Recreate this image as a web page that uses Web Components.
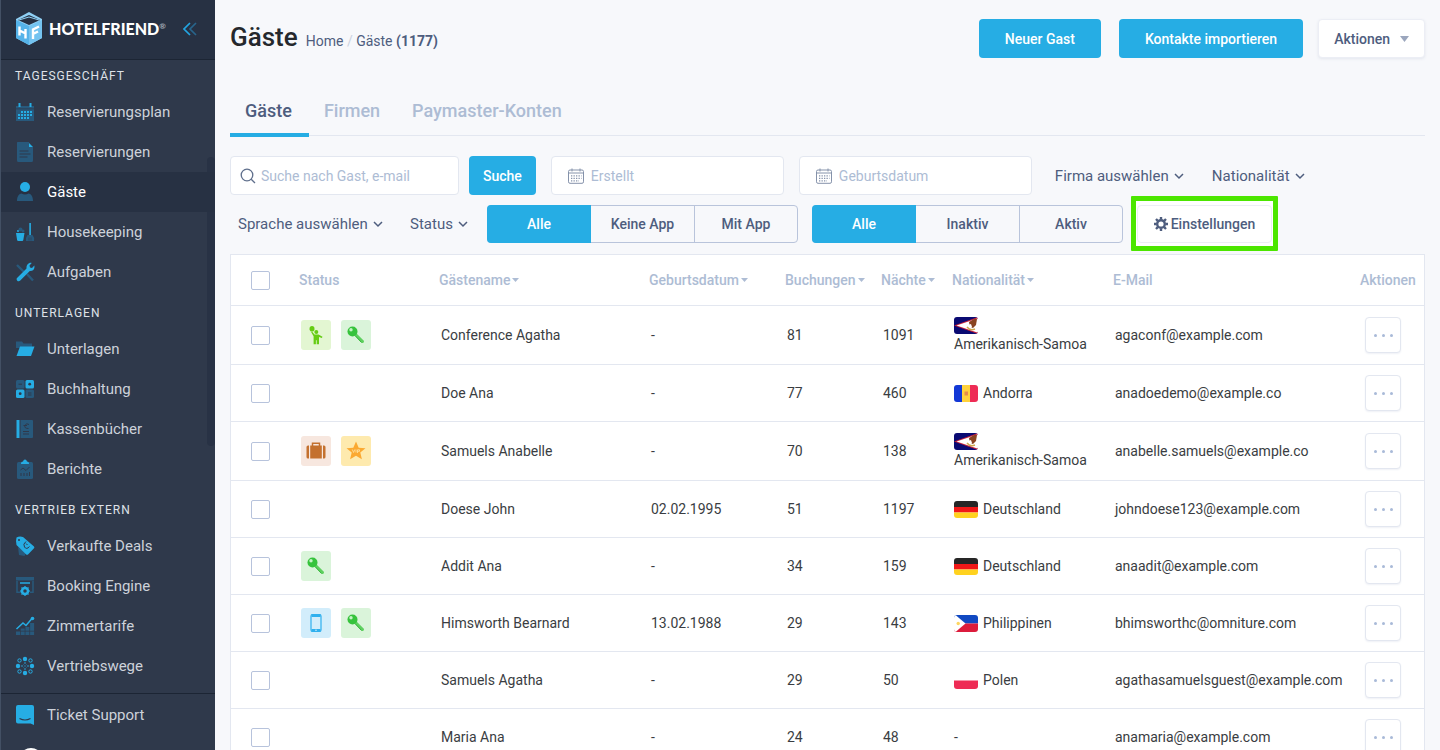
<!DOCTYPE html>
<html lang="de">
<head>
<meta charset="utf-8">
<title>Gäste – HotelFriend</title>
<meta name="viewport" content="width=device-width, initial-scale=1">
<style>
:root {
  --blue: #26ade4;
  --dim: #28597c;
  --ink: #3a3d42;
  --slate: #4e5d7e;
  --muted: #adbcd4;
  --line: #e3e7f0;
  --page: #f7f8fb;
}
body { margin: 0; background: var(--page); color: var(--ink); font: 14px/20px Roboto, "Liberation Sans", sans-serif; overflow: hidden; }
</style>
</head>
<body>
<hf-app>
  <hf-sidebar slot="sidebar">
    <hf-nav-section label="Tagesgeschäft" first>
      <hf-nav-item icon="calendar">Reservierungsplan</hf-nav-item>
      <hf-nav-item icon="document">Reservierungen</hf-nav-item>
      <hf-nav-item icon="person" active>Gäste</hf-nav-item>
      <hf-nav-item icon="cleaning">Housekeeping</hf-nav-item>
      <hf-nav-item icon="tools">Aufgaben</hf-nav-item>
    </hf-nav-section>
    <hf-nav-section label="Unterlagen">
      <hf-nav-item icon="folder">Unterlagen</hf-nav-item>
      <hf-nav-item icon="calc">Buchhaltung</hf-nav-item>
      <hf-nav-item icon="book">Kassenbücher</hf-nav-item>
      <hf-nav-item icon="clipboard">Berichte</hf-nav-item>
    </hf-nav-section>
    <hf-nav-section label="Vertrieb extern">
      <hf-nav-item icon="tag">Verkaufte Deals</hf-nav-item>
      <hf-nav-item icon="engine">Booking Engine</hf-nav-item>
      <hf-nav-item icon="chart">Zimmertarife</hf-nav-item>
      <hf-nav-item icon="network">Vertriebswege</hf-nav-item>
    </hf-nav-section>
    <hf-nav-item slot="footer" icon="chat">Ticket Support</hf-nav-item>
  </hf-sidebar>

  <hf-page-header heading="Gäste" count="1177">
    <hf-button>Neuer Gast</hf-button>
    <hf-button>Kontakte importieren</hf-button>
    <hf-button kind="menu">Aktionen</hf-button>
  </hf-page-header>
  <hf-tabs items="Gäste|Firmen|Paymaster-Konten"></hf-tabs>
  <hf-filters></hf-filters>
  <hf-guest-table></hf-guest-table>
</hf-app>

<script>
const RESET = `
  *, *::before, *::after { box-sizing: border-box; }
  button, input, select { font: inherit; color: inherit; margin: 0; }
  button, select, a { cursor: pointer; }
  a { color: inherit; text-decoration: none; }
  svg { display: block; flex: none; }
`;

function define(name, render) {
  customElements.define(name, class extends HTMLElement {
    connectedCallback() {
      if (this.shadowRoot) return;
      const template = document.createElement('template');
      template.innerHTML = render(this);
      this.attachShadow({ mode: 'open' }).append(template.content.cloneNode(true));
    }
  });
}

/* ---------- icons ---------- */
/* class b: bright blue, class d: dim blue, class k: sidebar colour cut-out */
const ICONS = {
  calendar: `<path class="d" d="M1 4h18v15H1z"/><path class="b" d="M3.500 1h2v4h-2zM14.500 1h2v4h-2z"/><path class="k" d="M1 6.500h18v.8H1z"/>
    <g class="b"><path d="M6 9h2v2H6zM9 9h2v2H9zM12 9h2v2h-2zM15 9h2v2h-2zM3 12h2v2H3zM6 12h2v2H6zM9 12h2v2H9zM12 12h2v2h-2zM15 12h2v2h-2zM3 15h2v2H3zM6 15h2v2H6zM9 15h2v2H9zM12 15h2v2h-2z"/></g>`,
  document: `<path class="d" d="M2.500 0H14v5h4v13.500q0 1.500-1.500 1.500h-13Q2 20 2 18.500V1q0-1 .5-1z"/><path class="b" d="M14 1l4 4h-4z"/><path class="ks" d="M4.500 9h9M4.500 12h11M4.500 15h8"/>`,
  person: `<circle class="b" cx="10" cy="5" r="5"/><path class="d" d="M2 19c0-4 1.500-7 4.500-7.500 2 1.200 5 1.200 7 0 3 .5 4.500 3.500 4.500 7.500z"/>`,
  cleaning: `<path class="b" d="M14.300 1h1.600v12h-1.600zM1 11h8.500l-1.200 7q-.2 1-1 1h-4q-1 0-1.200-1z"/><circle class="b" cx="3" cy="9" r="1"/><circle class="d" cx="5.500" cy="7.500" r="2"/><circle class="d" cx="8" cy="9" r="1.500"/><path class="d" d="M12.500 13h5q2 2 1.500 6h-8q-.3-4 1.500-6z"/><path class="ks" style="stroke-width:.6" d="M14 15.500v3M16 15.500v3"/>`,
  tools: `<path class="ds" style="stroke-width:2.400" d="M2 3l7 7M12 12l6 6.500"/><path class="b" d="M14 1.200c1-.4 2-.4 2.700-.2L14.500 3.500l.5 2 2 .5 2.300-2.400c.8 3-1 5.700-4.500 5.500L5 18.800c-1.800 1.500-4.400-.8-3-2.800l9.500-9.500c-.2-2.500.7-4.500 2.500-5.300z"/>`,
  folder: `<path class="d" d="M1 2.500h6l1.500 2H17V9H1v8z"/><path class="b" d="M5 7.500h14.500L16 17H1.500z"/>`,
  calc: `<g class="d"><rect x="1" y="1" width="8.500" height="8.500" rx="1.500"/><rect x="10.500" y="10.500" width="8.500" height="8.500" rx="1.500"/></g><g class="b"><rect x="10.500" y="1" width="8.500" height="8.500" rx="1.500"/><rect x="1" y="10.500" width="8.500" height="8.500" rx="1.500"/></g><path class="ks" d="M3.500 5.200H7M13 14h3.500M13 16h3.500"/><circle class="k" cx="14.700" cy="5.200" r="1.400"/><circle class="k" cx="5.200" cy="14.700" r="1.400"/>`,
  book: `<path class="b" d="M1.500 1h3v18h-3z"/><path class="d" d="M5.500 1H17q1 0 1 1v16q0 1-1 1H5.500z"/><path class="ks" d="M14 5.500q-3-2-4 1t3.500 3M8.500 6.500H12M8 12.500h6M8 15h6"/>`,
  clipboard: `<path class="d" d="M3.500 3h13q1.500 0 1.500 1.500v14q0 1.500-1.500 1.500h-13Q2 20 2 18.500v-14Q2 3 3.500 3z"/><path class="b" d="M6 4.500q0-2 2-2 .5-2 2-2t2 2q2 0 2 2v.5H6z"/><path class="ks" d="M5.500 11l2.500-2 3 2.500L14.500 8M6 17v-3M9 17v-3M12 17v-3M14.500 17v-4"/>`,
  tag: `<path class="d" d="M3 11l8 6-1.500 3L4 19z"/><path class="b" d="M1.500 1.500Q4.500 0 8 1l11 9.500q.8 1 0 1.800L13 18.500q-1 .7-1.800 0L1.500 9Q.5 5 1.500 1.500z"/><circle class="k" cx="4" cy="4" r="1"/><path class="ks" d="M11 5.500Q7.500 8 9.500 11t5-.5M11 7.500l1.500 1.500"/>`,
  engine: `<path class="d" d="M1 1h18v3.500H1z"/><path class="ds" style="stroke-width:1.500" d="M2 5v11.200h4M18 5v11.200h-3"/><path class="bs" d="M5 7h10"/><circle class="bs" cx="10" cy="15" r="3" style="stroke-width:2.500"/><path class="bs" style="stroke-width:1.200" d="M10 10v1.500M10 18.500V20M5 15h1.500M13.500 15H15M6.500 11.500l1 1M12.500 17.500l1 1M13.500 11.500l-1 1M7.500 17.500l-1 1"/>`,
  chart: `<path class="d" d="M1 15.500h4V19H1zM5.700 15.500h4V19h-4zM10.400 15.500h4V19h-4zM15.100 15.500h4V19h-4zM5.700 12.500h4v2.200h-4zM10.400 11h4v3.700h-4zM15.100 7h4v7.700h-4z"/><path class="bs" d="M1.500 13l6.500-6 3 2.500L17 2.500"/><circle class="b" cx="17.500" cy="2.500" r="1.800"/>`,
  network: `<g class="b"><circle cx="10" cy="3" r="2.200"/><circle cx="10" cy="17" r="2.200"/><circle cx="3" cy="10" r="2.200"/><circle cx="17" cy="10" r="2.200"/><circle cx="10" cy="7" r=".8"/><circle cx="10" cy="13" r=".8"/><circle cx="7" cy="10" r=".8"/><circle cx="13" cy="10" r=".8"/></g><g class="bs" style="stroke-width:1"><circle cx="4.500" cy="4.500" r="1.700"/><circle cx="15.500" cy="4.500" r="1.700"/><circle cx="4.500" cy="15.500" r="1.700"/><circle cx="15.500" cy="15.500" r="1.700"/><path style="stroke:#28597c" d="M8 8l4 4M12 8l-4 4"/></g>`,
  chat: `<path class="b" d="M3 0h14q2 0 2 2v18l-3.500-1.500H3q-2 0-2-2V2q0-2 2-2z"/><path class="ks" style="stroke-width:1.200" d="M4.500 13.500q5.500 3 11 0"/>`
};

define('hf-icon', el => `
  <style>${RESET}
    :host { display: block; width: 20px; height: 20px; }
    .b { fill: var(--blue); } .d { fill: var(--dim); } .k { fill: #2f394b; }
    .bs, .ds, .ks { fill: none; stroke-width: 1.500; } .ks { stroke-width: 1; }
    .bs { stroke: var(--blue); } .ds { stroke: var(--dim); } .ks { stroke: #2f394b; }
  </style>
  <svg width="20" height="20" viewBox="0 0 20 20" aria-hidden="true">${ICONS[el.getAttribute('name')]}</svg>`);

/* ---------- shell ---------- */
define('hf-app', () => `
  <style>${RESET}
    :host { display: grid; grid-template-columns: 215px minmax(0, 1fr); height: 100vh; overflow: hidden; }
    main { padding: 19px 15px 0; overflow: hidden; }
  </style>
  <slot name="sidebar"></slot>
  <main><slot></slot></main>`);

define('hf-sidebar', () => `
  <style>${RESET}
    :host { display: flex; flex-direction: column; height: 100vh; background: #2f394b; color: #cdd2da; border-left: 1px solid #435064; overflow: hidden; }
    header { flex: none; display: flex; align-items: center; height: 60px; padding: 0 18px 2px 14px; background: #273143; border-bottom: 1px solid #1c2534; }
    .brand { display: flex; align-items: center; gap: 6px; flex: 1; color: #fff; font: 900 16px/20px Lato, sans-serif; }
    sup { font: 700 8px/8px Lato, sans-serif; color: #a5acb8; vertical-align: 6px; }
    .fold { border: 0; padding: 0; background: none; }
    .scroll { position: relative; flex: none; padding-bottom: 7px; }
    .thumb { position: absolute; right: 0; top: 97px; width: 8px; height: 289px; background: #283245; border-radius: 4px; }
    footer { flex: none; border-top: 1px solid #1c2534; padding-top: 1px; }
    .help { display: block; width: 24px; height: 24px; margin: 13px 0 0 18px; padding: 0; border: 0; border-radius: 50%; background: #fff; }
  </style>
  <header>
    <a class="brand" href="#">
      <svg width="28" height="33" viewBox="0 0 28 33" aria-hidden="true">
        <path fill="#8fd0f5" d="M14 0l13 7v19l-13 7L1 26V7z"/>
        <path fill="#55b3e9" d="M1 8l13 6v19L1 26z"/><path fill="#74c3f0" d="M27 8l-13 6v19l13-7z"/>
        <path fill="#273143" d="M14 3l11 5-11 5L3 8z"/><path fill="none" stroke="#8fd0f5" d="M4 8l10-3 10 3"/>
        <path fill="none" stroke="#fff" stroke-width="2.400" d="M4.500 14.500v9M10.500 17v9.500M4.500 18.500l6 3M18 27v-9.500l6-3M18 22l5-2.500"/>
      </svg>
      <span>HOTELFRIEND<sup>®</sup></span>
    </a>
    <button class="fold" aria-label="Menü einklappen">
      <svg width="14" height="14" viewBox="0 0 14 14" fill="none" stroke-width="1.700"><path stroke="#22a5e2" d="M7 1L1 7l6 6"/><path stroke="#28658c" d="M13 1L7 7l6 6"/></svg>
    </button>
  </header>
  <div class="scroll"><div class="thumb"></div><nav><slot></slot></nav></div>
  <footer><slot name="footer"></slot><button class="help" aria-label="Konto"></button></footer>`);

define('hf-nav-section', el => `
  <style>${RESET}
    :host { display: block; position: relative; }
    h2 { margin: 0; padding: 14px 14px 9px; font-size: 12px; line-height: 14px; font-weight: 400; letter-spacing: 1px; text-transform: uppercase; color: #dfe2e8; }
    :host([first]) h2 { padding-top: 9px; }
  </style>
  <h2>${el.getAttribute('label')}</h2>
  <slot></slot>`);

define('hf-nav-item', el => `
  <style>${RESET}
    :host { display: block; }
    a { display: flex; align-items: center; gap: 12px; height: 40px; padding-left: 14px; font-size: 15px; line-height: 20px; }
    :host([active]) a { background: #273143; color: #fff; }
  </style>
  <a href="#"><hf-icon name="${el.getAttribute('icon')}"></hf-icon><slot></slot></a>`);

/* ---------- header ---------- */
define('hf-button', el => `
  <style>${RESET}
    :host { display: block; }
    button { display: flex; align-items: center; justify-content: center; height: 39px; padding: 0 26px; border: 0; border-radius: 4px; background: var(--blue); color: #fff; font-weight: 500; white-space: nowrap; }
    .compact { padding: 0 14px; }
    .menu { gap: 10px; padding: 0 15px; background: #fff; color: var(--slate); border: 1px solid #eceef5; box-shadow: 0 1px 3px #e3e6ee; }
  </style>
  <button class="${el.getAttribute('kind') || ''}"><slot></slot>${el.getAttribute('kind') === 'menu'
    ? '<svg width="9" height="6" viewBox="0 0 9 6"><path fill="#9ba6bd" d="M0 0h9L4.500 6z"/></svg>' : ''}</button>`);

define('hf-page-header', el => `
  <style>${RESET}
    :host { display: flex; justify-content: space-between; align-items: flex-start; }
    .title { display: flex; align-items: baseline; gap: 8px; line-height: 36px; }
    h1 { margin: 0; font-size: 26px; font-weight: 500; color: #25282d; }
    nav { color: var(--slate); } i { color: #ccd3df; font-style: normal; }
    .actions { display: flex; gap: 18px; }
    ::slotted([kind=menu]) { margin-left: -3px; }
  </style>
  <div class="title"><h1>${el.getAttribute('heading')}</h1>
    <nav><a href="#">Home</a> <i>/</i> ${el.getAttribute('heading')} <b>(${el.getAttribute('count')})</b></nav></div>
  <div class="actions"><slot></slot></div>`);

define('hf-tabs', el => `
  <style>${RESET}
    :host { display: flex; margin: 28px 0 20px; height: 48px; border-bottom: 1px solid var(--line); }
    a { height: 50px; padding: 0 17px 0 15px; font-size: 18px; line-height: 48px; font-weight: 500; color: var(--muted); }
    a.on { color: var(--slate); border-bottom: 4px solid var(--blue); }
  </style>
  ${el.getAttribute('items').split('|').map((t, i) => `<a href="#" class="${i ? '' : 'on'}">${t}</a>`).join('')}`);

/* ---------- filters ---------- */
const SEARCH = `<svg width="16" height="16" viewBox="0 0 16 16" fill="none" stroke="#5f6f8c" stroke-width="1.300"><circle cx="7" cy="7" r="5.800"/><path d="M11.200 11.200L15 15"/></svg>`;
const DATE = `<svg width="16" height="16" viewBox="0 0 16 16" fill="none" stroke="#8592aa"><rect x=".5" y="2" width="15" height="13.300" rx="1.500"/><path d="M.5 5h15M4 .5v3M12 .5v3"/><path stroke-width="1.300" stroke-dasharray="1.300 1.200" d="M3 7.800h10.500M3 10.300h10.500M3 12.800h8"/></svg>`;

define('hf-field', el => `
  <style>${RESET}
    :host { display: block; }
    label { display: flex; align-items: center; gap: 5px; height: 39px; padding: 0 9px; background: #fff; border: 1px solid var(--line); border-radius: 4px; }
    .date { gap: 7px; padding-left: 16px; }
    input { flex: 1; min-width: 0; height: 30px; padding: 0; border: 0; outline: 0; background: none; }
    input::placeholder { color: var(--muted); opacity: 1; }
  </style>
  <label class="${el.getAttribute('kind')}">${el.getAttribute('kind') === 'date' ? DATE : SEARCH}
    <input type="text" placeholder="${el.getAttribute('label')}" aria-label="${el.getAttribute('label')}"></label>`);

define('hf-dropdown', el => `
  <style>${RESET}
    :host { display: block; }
    label { position: relative; display: block; color: var(--slate); }
    select { appearance: none; display: block; height: 38px; padding: 0 20px 0 8px; border: 0; background: none; font-size: 15px; }
    svg { position: absolute; right: 5px; top: 16px; pointer-events: none; }
  </style>
  <label><select aria-label="${el.getAttribute('label')}"><option>${el.getAttribute('label')}</option></select>
    <svg width="10" height="7" viewBox="0 0 10 7" fill="none" stroke="#4e5d7e" stroke-width="1.500"><path d="M1 1l4 4 4-4"/></svg></label>`);

define('hf-segments', el => `
  <style>${RESET}
    :host { display: block; }
    div { display: grid; grid-template-columns: repeat(3, 103px); height: 38px; border: 1px solid #b9c4db; border-radius: 4px; }
    button { padding: 0; border: 0; background: none; color: var(--slate); font-weight: 500; }
    button + button + button { border-left: 1px solid #b9c4db; }
    .on { background: var(--blue); color: #fff; margin: -1px 0 -1px -1px; border-radius: 4px 0 0 4px; }
  </style>
  <div role="group">${el.getAttribute('items').split('|').map((t, i) =>
    `<button class="${i ? '' : 'on'}" aria-pressed="${!i}">${t}</button>`).join('')}</div>`);

define('hf-settings', () => `
  <style>${RESET}
    :host { display: block; position: relative; }
    :host::before { content: ""; position: absolute; inset: -9px -6px -8px; background: #fff; border: 5px solid #4ce600; border-radius: 1px; }
    button { position: relative; display: flex; align-items: center; justify-content: center; gap: 3px; width: 135px; height: 38px; padding: 0; background: #fff; border: 1px solid #eceef5; border-radius: 4px; color: var(--slate); font-weight: 500; }
  </style>
  <button><svg width="14" height="14" viewBox="0 0 14 14"><circle cx="7" cy="7" r="3.800" fill="none" stroke="#4e5d7e" stroke-width="2.400"/><path stroke="#4e5d7e" stroke-width="2.400" d="M7 0v2.500M7 11.500V14M0 7h2.500M11.500 7H14M2 2l1.800 1.800M10.200 10.200L12 12M12 2l-1.800 1.800M3.800 10.200L2 12"/></svg>Einstellungen</button>`);

define('hf-filters', () => `
  <style>${RESET}
    :host { display: flex; flex-direction: column; gap: 10px; margin-bottom: 11px; }
    .row { display: flex; align-items: center; gap: 15px; }
    .second { gap: 14px; }
    .find { display: flex; gap: 10px; }
    .find hf-field { width: 229px; }
    .row > hf-field { width: 233px; }
  </style>
  <div class="row">
    <div class="find"><hf-field kind="search" label="Suche nach Gast, e-mail"></hf-field><hf-button kind="compact">Suche</hf-button></div>
    <hf-field kind="date" label="Erstellt"></hf-field>
    <hf-field kind="date" label="Geburtsdatum"></hf-field>
    <hf-dropdown label="Firma auswählen"></hf-dropdown>
    <hf-dropdown label="Nationalität"></hf-dropdown>
  </div>
  <div class="row second">
    <hf-dropdown label="Sprache auswählen"></hf-dropdown>
    <hf-dropdown label="Status"></hf-dropdown>
    <hf-segments items="Alle|Keine App|Mit App"></hf-segments>
    <hf-segments items="Alle|Inaktiv|Aktiv"></hf-segments>
    <hf-settings></hf-settings>
  </div>`);

/* ---------- table ---------- */
const BADGES = {
  guest: ['#e3f6d2', `<g fill="#66cc14"><ellipse cx="11" cy="8.800" rx="2.500" ry="2.800"/><circle cx="15.300" cy="12" r="2"/><path d="M11 11.500l2.500 3h4l4 2.300-.6 1.300-2.900-1.200v7.300h-2.300v-4h-.8v4h-2.300v-8l-2.400-4z"/></g>`],
  key: ['#daf4da', `<path stroke="#5fd060" stroke-width="3" stroke-linecap="round" d="M13 13l8.500 8.500"/><path fill="none" stroke="#36b53b" d="M14.500 16l6 6.500"/><circle cx="11.500" cy="11.500" r="5" fill="#36c33c"/><circle cx="10" cy="9.800" r="1.700" fill="#c6f3c6"/>`],
  bag: ['#f7e7df', `<path fill="none" stroke="#c4712f" stroke-width="1.500" d="M11.500 10V7.200h7V10"/><g fill="#c4712f"><path d="M9.200 9.500h11.600v13H9.200z"/><path d="M8 9.500v13H7q-1.500 0-1.500-1.500V11q0-1.500 1.500-1.500zM22 9.500v13h1q1.500 0 1.500-1.500V11q0-1.500-1.500-1.500z"/></g>`],
  vip: ['#feeaae', `<path fill="#fba932" d="M15 5.500l2.700 6.200 6.800.5-5.200 4.400 1.600 6.600-5.900-3.500-5.900 3.500 1.600-6.600-5.200-4.400 6.800-.5z"/><path fill="none" stroke="#fedf9a" stroke-width=".9" d="M11.300 13.500l1.300 3 1.200-3M15 13.500v3M16.500 17v-3.200h2v1.500h-2"/>`],
  phone: ['#d2edfb', `<rect x="10" y="6.500" width="10" height="17" rx="1.500" fill="none" stroke="#2fb0ee" stroke-width="1.200"/><path stroke="#2fb0ee" stroke-width="3" d="M10.500 7.500h9M10.500 22.500h9"/><circle cx="15" cy="22.300" r=".8" fill="#d2edfb"/>`]
};
define('hf-badge', el => {
  const [bg, art] = BADGES[el.getAttribute('type')];
  return `<style>${RESET}:host { display: block; width: 30px; height: 30px; border-radius: 3px; background: ${bg}; }</style>
    <svg width="30" height="30" viewBox="0 0 30 30" aria-hidden="true">${art}</svg>`;
});

const FLAGS = {
  as: `<path fill="#0a0a72" d="M0 0h24v17H0z"/><path fill="#c8203a" d="M24 0L0 8.500 24 17z"/><path fill="#fff" d="M24 1.200L2.500 8.500 24 15.800z"/><path fill="#8a4320" d="M15 5l5-3h3l-1 6-3 3-3-1z"/><path fill="#fff" d="M14 8l3-1 1 3-2 2z"/><path fill="none" stroke="#cfa84f" stroke-width="1.400" d="M13 10q3 4 8 2"/>`,
  ad: `<path fill="#1338d6" d="M0 0h8v17H0z"/><path fill="#ffd23c" d="M8 0h8v17H8z"/><path fill="#ee2c55" d="M16 0h8v17h-8z"/><path fill="#e58b4a" d="M10.500 6.500h3.500v4h-3.500z"/>`,
  de: `<path fill="#262626" d="M0 0h24v6H0z"/><path fill="#f01818" d="M0 6h24v5.500H0z"/><path fill="#ffd21f" d="M0 11.500h24V17H0z"/>`,
  ph: `<path fill="#1149c2" d="M0 0h24v8.500H0z"/><path fill="#dc1c3c" d="M0 8.500h24V17H0z"/><path fill="#fff" d="M0 0h1.500l10 8.500-10 8.500H0z"/><circle cx="4.200" cy="8.500" r="1.700" fill="#fdd662"/>`,
  pl: `<path fill="#fff" d="M0 0h24v8.500H0z"/><path fill="#ee2c55" d="M0 8.500h24V17H0z"/>`
};
define('hf-flag', el => `
  <style>${RESET}:host { display: block; width: 24px; height: 17px; border-radius: 3px; overflow: hidden; }</style>
  <svg width="24" height="17" viewBox="0 0 24 17" aria-hidden="true">${FLAGS[el.getAttribute('country')]}</svg>`);

const GUESTS = [
  [['guest', 'key'], 'Conference Agatha', '-', 81, 1091, 'as', 'Amerikanisch-Samoa', 'agaconf@example.com'],
  [[], 'Doe Ana', '-', 77, 460, 'ad', 'Andorra', 'anadoedemo@example.co'],
  [['bag', 'vip'], 'Samuels Anabelle', '-', 70, 138, 'as', 'Amerikanisch-Samoa', 'anabelle.samuels@example.co'],
  [[], 'Doese John', '02.02.1995', 51, 1197, 'de', 'Deutschland', 'johndoese123@example.com'],
  [['key'], 'Addit Ana', '-', 34, 159, 'de', 'Deutschland', 'anaadit@example.com'],
  [['phone', 'key'], 'Himsworth Bearnard', '13.02.1988', 29, 143, 'ph', 'Philippinen', 'bhimsworthc@omniture.com'],
  [[], 'Samuels Agatha', '-', 29, 50, 'pl', 'Polen', 'agathasamuelsguest@example.com'],
  [[], 'Maria Ana', '-', 24, 48, '', '-', 'anamaria@example.com']
];
const sortable = t => `<button class="sort">${t}<svg width="7" height="4" viewBox="0 0 7 4"><path fill="currentColor" d="M0 0h7L3.500 4z"/></svg></button>`;

define('hf-guest-table', () => `
  <style>${RESET}
    :host { display: block; background: #fff; border: 1px solid var(--line); }
    table { width: 100%; table-layout: fixed; border-collapse: separate; border-spacing: 0; }
    col.check { width: 60px; } col.status { width: 140px; } col.name { width: 210px; } col.birth { width: 136px; }
    col.count { width: 96px; } col.nights { width: 71px; } col.country { width: 161px; } col.act { width: 72px; }
    th, td { text-align: left; white-space: nowrap; border-bottom: 1px solid var(--line); vertical-align: middle; }
    th { height: 51px; padding: 0 0 0 8px; font-weight: 500; color: var(--muted); }
    td { height: 57px; padding: 0 0 0 10px; line-height: 19px; }
    th.check, td.check { padding-left: 20px; }
    .sort { display: flex; align-items: center; gap: 2px; padding: 0; border: 0; background: none; font-weight: 500; }
    input { appearance: none; display: block; width: 19px; height: 19px; border: 1px solid #b7c3dc; border-radius: 2px; background: #fff; }
    .badges { display: flex; gap: 10px; }
    .nation { display: flex; flex-wrap: wrap; align-items: center; column-gap: 5px; padding: 10px 0; }
    .nation hf-flag { margin: 1px 0; }
    .more { display: flex; align-items: center; justify-content: center; gap: 5px; width: 36px; height: 36px; margin-left: 3px; padding: 0; border: 1px solid var(--line); border-radius: 4px; background: #fff; box-shadow: 0 1px 2px #eff1f6; }
    .more i { width: 3px; height: 3px; border-radius: 50%; background: #a9bad8; }
  </style>
  <table>
    <colgroup><col class="check"><col class="status"><col class="name"><col class="birth"><col class="count"><col class="nights"><col class="country"><col><col class="act"></colgroup>
    <thead><tr>
      <th class="check"><input type="checkbox" aria-label="Alle auswählen"></th><th>Status</th>
      <th>${sortable('Gästename')}</th><th>${sortable('Geburtsdatum')}</th><th>${sortable('Buchungen')}</th>
      <th>${sortable('Nächte')}</th><th>${sortable('Nationalität')}</th><th>E-Mail</th><th>Aktionen</th>
    </tr></thead>
    <tbody>${GUESTS.map(([badges, name, birth, bookings, nights, flag, nation, mail]) => `<tr>
      <td class="check"><input type="checkbox" aria-label="${name} auswählen"></td>
      <td><div class="badges">${badges.map(b => `<hf-badge type="${b}"></hf-badge>`).join('')}</div></td>
      <td>${name}</td><td>${birth}</td><td>${bookings}</td><td>${nights}</td>
      <td><div class="nation">${flag ? `<hf-flag country="${flag}"></hf-flag>` : ''}<span>${nation}</span></div></td>
      <td>${mail}</td>
      <td><button class="more" aria-label="Aktionen für ${name}"><i></i><i></i><i></i></button></td>
    </tr>`).join('')}</tbody>
  </table>`);
</script>
</body>
</html>
